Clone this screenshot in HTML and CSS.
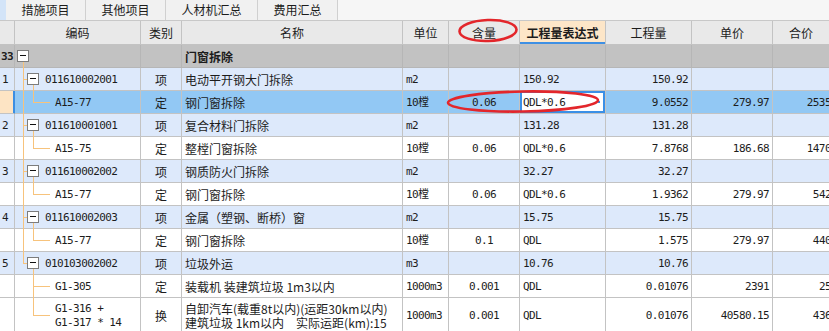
FILE: index.html
```html
<!DOCTYPE html>
<html lang="zh">
<head>
    <meta charset="UTF-8">
    <title>分部分项</title>
    <link rel="stylesheet" href="styles.css">
</head>
<body>
    <div class="tabs">
        <div class="tab-edge"></div>
        <div class="tab">措施项目</div>
        <div class="tab">其他项目</div>
        <div class="tab wide">人材机汇总</div>
        <div class="tab">费用汇总</div>
    </div>

    <div class="sheet">
        <div class="row head">
            <div></div>
            <div>编码</div>
            <div>类别</div>
            <div>名称</div>
            <div>单位</div>
            <div>含量</div>
            <div class="active">工程量表达式</div>
            <div>工程量</div>
            <div>单价</div>
            <div class="total">合价</div>
        </div>

        <div class="row group">
            <div class="num"><b>33</b></div>
            <div class="code grp"><i class="box"></i><i class="ln v2 from-box"></i></div>
            <div></div>
            <div class="name"><b>门窗拆除</b></div>
            <div></div><div></div><div></div><div></div><div></div><div></div>
        </div>

        <div class="row item">
            <div class="num">1</div>
            <div class="code it"><i class="ln v1"></i><i class="ln stub"></i><i class="box"></i><i class="ln v2 from-box"></i>011610002001</div>
            <div class="mid">项</div>
            <div class="name">电动平开钢大门拆除</div>
            <div class="mono">m2</div>
            <div></div>
            <div class="mono">150.92</div>
            <div class="mono right">150.92</div>
            <div></div><div></div>
        </div>
        <div class="row selected">
            <div class="num"></div>
            <div class="code sub"><i class="ln v1"></i><i class="ln v2 half"></i><i class="ln leaf"></i>A15-77</div>
            <div class="mid">定</div>
            <div class="name">钢门窗拆除</div>
            <div class="mono">10樘</div>
            <div class="mono mid">0.06</div>
            <div class="mono edit">QDL*0.6<i class="handle"></i></div>
            <div class="mono right">9.0552</div>
            <div class="mono right">279.97</div>
            <div class="mono right">2535.18</div>
        </div>

        <div class="row item">
            <div class="num">2</div>
            <div class="code it"><i class="ln v1"></i><i class="ln stub"></i><i class="box"></i><i class="ln v2 from-box"></i>011610001001</div>
            <div class="mid">项</div>
            <div class="name">复合材料门拆除</div>
            <div class="mono">m2</div>
            <div></div>
            <div class="mono">131.28</div>
            <div class="mono right">131.28</div>
            <div></div><div></div>
        </div>
        <div class="row">
            <div class="num"></div>
            <div class="code sub"><i class="ln v1"></i><i class="ln v2 half"></i><i class="ln leaf"></i>A15-75</div>
            <div class="mid">定</div>
            <div class="name">整樘门窗拆除</div>
            <div class="mono">10樘</div>
            <div class="mono mid">0.06</div>
            <div class="mono">QDL*0.6</div>
            <div class="mono right">7.8768</div>
            <div class="mono right">186.68</div>
            <div class="mono right">1470.44</div>
        </div>

        <div class="row item">
            <div class="num">3</div>
            <div class="code it"><i class="ln v1"></i><i class="ln stub"></i><i class="box"></i><i class="ln v2 from-box"></i>011610002002</div>
            <div class="mid">项</div>
            <div class="name">钢质防火门拆除</div>
            <div class="mono">m2</div>
            <div></div>
            <div class="mono">32.27</div>
            <div class="mono right">32.27</div>
            <div></div><div></div>
        </div>
        <div class="row">
            <div class="num"></div>
            <div class="code sub"><i class="ln v1"></i><i class="ln v2 half"></i><i class="ln leaf"></i>A15-77</div>
            <div class="mid">定</div>
            <div class="name">钢门窗拆除</div>
            <div class="mono">10樘</div>
            <div class="mono mid">0.06</div>
            <div class="mono">QDL*0.6</div>
            <div class="mono right">1.9362</div>
            <div class="mono right">279.97</div>
            <div class="mono right">542.08</div>
        </div>

        <div class="row item">
            <div class="num">4</div>
            <div class="code it"><i class="ln v1"></i><i class="ln stub"></i><i class="box"></i><i class="ln v2 from-box"></i>011610002003</div>
            <div class="mid">项</div>
            <div class="name">金属（塑钢、断桥）窗</div>
            <div class="mono">m2</div>
            <div></div>
            <div class="mono">15.75</div>
            <div class="mono right">15.75</div>
            <div></div><div></div>
        </div>
        <div class="row">
            <div class="num"></div>
            <div class="code sub"><i class="ln v1"></i><i class="ln v2 half"></i><i class="ln leaf"></i>A15-77</div>
            <div class="mid">定</div>
            <div class="name">钢门窗拆除</div>
            <div class="mono">10樘</div>
            <div class="mono mid">0.1</div>
            <div class="mono">QDL</div>
            <div class="mono right">1.575</div>
            <div class="mono right">279.97</div>
            <div class="mono right">440.95</div>
        </div>

        <div class="row item">
            <div class="num">5</div>
            <div class="code it"><i class="ln v1 half"></i><i class="ln stub"></i><i class="box"></i><i class="ln v2 from-box"></i>010103002002</div>
            <div class="mid">项</div>
            <div class="name">垃圾外运</div>
            <div class="mono">m3</div>
            <div></div>
            <div class="mono">10.76</div>
            <div class="mono right">10.76</div>
            <div></div><div></div>
        </div>
        <div class="row">
            <div class="num"></div>
            <div class="code sub"><i class="ln v2"></i><i class="ln leaf"></i>G1-305</div>
            <div class="mid">定</div>
            <div class="name">装载机 装建筑垃圾 1m3以内</div>
            <div class="mono">1000m3</div>
            <div class="mono mid">0.001</div>
            <div class="mono">QDL</div>
            <div class="mono right">0.01076</div>
            <div class="mono right">2391</div>
            <div class="mono right">25.73</div>
        </div>
        <div class="row tall">
            <div class="num"></div>
            <div class="code sub"><i class="ln v2 half"></i><i class="ln leaf"></i>G1-316 +<br>G1-317 * 14</div>
            <div class="mid">换</div>
            <div class="name">自卸汽车(载重8t以内)(运距30km以内)<br>建筑垃圾 1km以内　实际运距(km):15</div>
            <div class="mono">1000m3</div>
            <div class="mono mid">0.001</div>
            <div class="mono">QDL</div>
            <div class="mono right">0.01076</div>
            <div class="mono right">40580.15</div>
            <div class="mono right">436.64</div>
        </div>
    </div>

    <!-- red hand-drawn marks over the grid -->
    <svg class="marks" width="829" height="331" viewBox="0 0 829 331">
        <ellipse cx="488" cy="30.5" rx="28.5" ry="10.5" transform="rotate(-2 488 30.5)"/>
        <ellipse cx="523" cy="101.5" rx="75" ry="10" transform="rotate(-1 523 101.5)"/>
    </svg>
</body>
</html>
```

FILE: styles.css
```css
body {
    margin: 0;
    width: 829px;
    height: 331px;
    overflow: hidden;
    position: relative;
    background: #fff;
    color: #1c1c1c;
    font-family: "Noto Sans CJK SC", sans-serif;
    font-size: 12px;
}
.tabs {
    display: flex;
    height: 21px;
    box-sizing: border-box;
    border-bottom: 1px solid #c8c8c8;
    background: #f6f6f6;
}
.tab-edge {
    width: 6px;
    background: #d3e4f8;
}
.tab {
    width: 80px;
    box-sizing: border-box;
    border-right: 1px solid #d0d0d0;
    background: #f1f1f1;
    display: flex;
    align-items: center;
    justify-content: center;
    line-height: 1;
}
.tab.wide {
    width: 92px;
}
.sheet {
    width: 857px;
}
.row {
    display: grid;
    grid-template-columns: 15px 126px 41px 221px 46px 71px 86px 86px 81px 84px;
    height: 23px;
}
.row > div {
    box-sizing: border-box;
    border-right: 1px solid #c3c3c3;
    border-bottom: 1px solid #c3c3c3;
    display: flex;
    align-items: center;
    padding: 0 3px;
    white-space: nowrap;
    overflow: hidden;
    line-height: 13px;
}
.head {
    height: 24px;
    background: #e9e9e9;
}
.head > div {
    justify-content: center;
}
.head .active {
    background: #fde6c8;
    font-weight: bold;
    box-shadow: inset 0 -2px 0 #3f90e4;
}
.head .total {
    justify-content: flex-start;
    padding-left: 16px;
}
.group {
    background: #c2c2c2;
}
.group > div {
    border-color: #b6b6b6;
}
.item {
    background: #dde9fb;
}
.selected {
    background: #92c8f4;
}
.num {
    font-family: "DejaVu Sans Mono", monospace;
    font-size: 11px;
    letter-spacing: -0.6px;
    padding: 0 0 0 2px !important;
}
.group .num {
    justify-content: flex-end;
    padding: 0 1px 0 0 !important;
}
.selected .num {
    background: #fde4c4;
    border-right-color: #3c8ee2;
    box-shadow: inset -1px 0 0 #3c8ee2;
}
.mono, .code {
    font-family: "DejaVu Sans Mono", "Noto Sans CJK SC", monospace;
    font-size: 11px;
    letter-spacing: -0.6px;
}
.mid {
    justify-content: center;
}
.right {
    justify-content: flex-end;
}
.row > .right:last-child {
    padding-right: 7px;
}
.name {
    font-size: 12px;
}
.row > .code {
    position: relative;
    overflow: visible;
}
.code.it {
    padding-left: 30px;
}
.code.sub {
    padding-left: 40px;
}
.box {
    position: absolute;
    left: 12px;
    top: 5px;
    width: 12px;
    height: 12px;
    box-sizing: border-box;
    border: 1px solid #7c7c7c;
    background: #fff;
    z-index: 2;
}
.box::after {
    content: "";
    position: absolute;
    left: 2px;
    top: 4px;
    width: 6px;
    height: 1px;
    background: #111;
}
.grp .box {
    left: 2px;
}
.ln {
    position: absolute;
    background: #f7c37c;
    z-index: 1;
}
.ln.v1 {
    left: 8px;
    top: 0;
    bottom: -1px;
    width: 1px;
}
.ln.v2 {
    left: 18px;
    top: 0;
    bottom: -1px;
    width: 1px;
}
.grp .ln.v2 {
    left: 8px;
}
.ln.from-box {
    top: 16px;
}
.ln.half {
    bottom: auto;
    height: 11px;
}
.tall .ln.half {
    height: 17px;
}
.ln.stub {
    left: 8px;
    top: 11px;
    width: 5px;
    height: 1px;
}
.ln.leaf {
    left: 18px;
    top: 11px;
    width: 17px;
    height: 1px;
}
.tall .ln.leaf {
    top: 17px;
}
.tall {
    height: 36px;
}
.tall > div {
    line-height: 14px;
}
.edit {
    background: #fff;
    box-shadow: inset 0 0 0 2px #3a8fe6;
    position: relative;
    overflow: visible !important;
}
.handle {
    position: absolute;
    right: 5px;
    top: 10px;
    width: 2px;
    height: 2px;
    background: #3a8fe6;
}
.marks {
    position: absolute;
    left: 0;
    top: 0;
    pointer-events: none;
}
.marks ellipse {
    fill: none;
    stroke: #e3262b;
    stroke-width: 2.6;
}
```
